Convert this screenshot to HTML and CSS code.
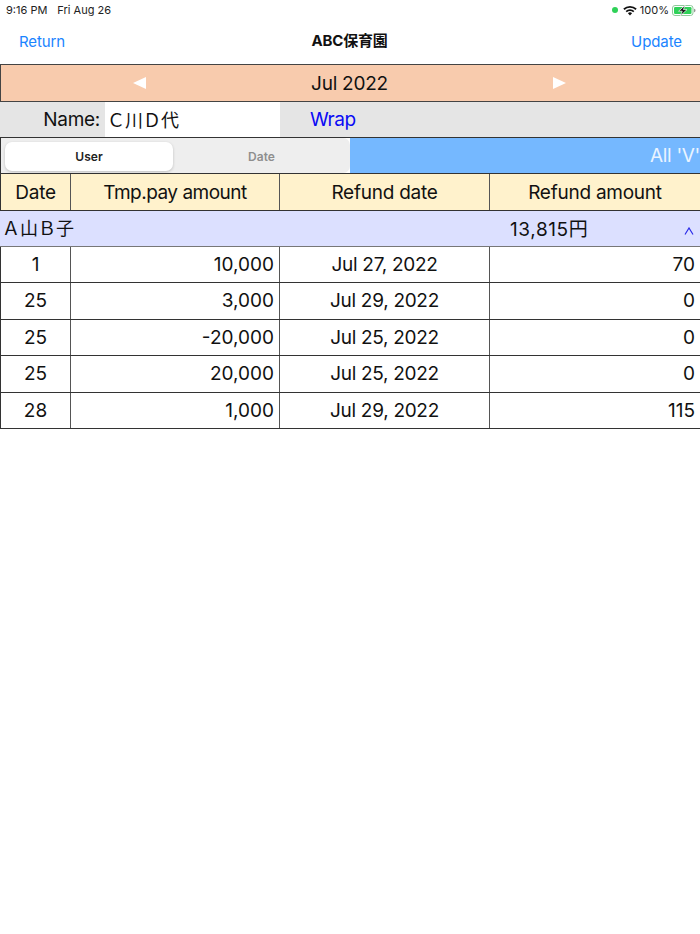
FILE: index.html
```html
<!DOCTYPE html>
<html lang="en">
<head>
    <meta charset="UTF-8">
    <title>ABC保育園</title>
    <link rel="stylesheet" href="styles.css">
</head>
<body>
    <div class="status-bar">
        <div class="status-left"><span>9:16 PM</span><span>Fri Aug 26</span></div>
        <div class="status-right">
            <span class="status-dot"></span>
            <svg class="wifi" width="14" height="11" viewBox="0 0 14 11">
                <path d="M0.3 3.6 A9.6 9.6 0 0 1 13.7 3.6 L12.5 4.9 A7.9 7.9 0 0 0 1.5 4.9 Z" fill="#111"/>
                <path d="M2.6 6 A6.3 6.3 0 0 1 11.4 6 L10.2 7.2 A4.6 4.6 0 0 0 3.8 7.2 Z" fill="#111"/>
                <path d="M4.9 8.3 A3 3 0 0 1 9.1 8.3 L7 10.5 Z" fill="#111"/>
            </svg>
            <span>100%</span>
            <svg class="battery" width="24" height="11" viewBox="0 0 24 11">
                <rect x="0.5" y="0.5" width="20.5" height="10" rx="2.5" fill="none" stroke="#8fc99a"/>
                <rect x="2" y="2" width="17.5" height="7" rx="1.2" fill="#2fd158"/>
                <path d="M22 3.8 C23 4 23.5 4.6 23.5 5.5 C23.5 6.4 23 7 22 7.2 Z" fill="#999"/>
                <path d="M13.2 0.2 L6.6 6.2 H10.2 L8.4 10.8 L15 4.6 H11.4 Z" fill="#111" stroke="#fff" stroke-width="0.7"/>
            </svg>
        </div>
    </div>

    <div class="nav-bar">
        <a class="nav-link">Return</a>
        <div class="nav-title">ABC保育園</div>
        <a class="nav-link">Update</a>
    </div>

    <div class="month-bar">
        <span class="arrow arrow-left"></span>
        <span class="month-label">Jul 2022</span>
        <span class="arrow arrow-right"></span>
    </div>

    <div class="name-row">
        <div class="name-label">Name:</div>
        <div class="name-value">Ｃ川Ｄ代</div>
        <div class="wrap-link">Wrap</div>
    </div>

    <div class="filter-row">
        <div class="segments">
            <div class="segment active">User</div>
            <div class="segment">Date</div>
        </div>
        <div class="all-v">All 'V'</div>
    </div>

    <div class="table-row table-head">
        <div class="cell center">Date</div>
        <div class="cell center tight">Tmp.pay amount</div>
        <div class="cell center">Refund date</div>
        <div class="cell center">Refund amount</div>
    </div>

    <div class="group-row">
        <div class="group-name">Ａ山Ｂ子</div>
        <div class="group-total">13,815円</div>
        <svg class="group-caret" width="10" height="8" viewBox="0 0 10 8">
            <path d="M1 7.5 L5 1 L9 7.5" fill="none" stroke="#2a2ae8" stroke-width="1.2"/>
        </svg>
    </div>

    <div class="table-row">
        <div class="cell center">1</div>
        <div class="cell right">10,000</div>
        <div class="cell center date-cell">Jul 27, 2022</div>
        <div class="cell right">70</div>
    </div>
    <div class="table-row">
        <div class="cell center">25</div>
        <div class="cell right">3,000</div>
        <div class="cell center date-cell">Jul 29, 2022</div>
        <div class="cell right">0</div>
    </div>
    <div class="table-row">
        <div class="cell center">25</div>
        <div class="cell right">-20,000</div>
        <div class="cell center date-cell">Jul 25, 2022</div>
        <div class="cell right">0</div>
    </div>
    <div class="table-row">
        <div class="cell center">25</div>
        <div class="cell right">20,000</div>
        <div class="cell center date-cell">Jul 25, 2022</div>
        <div class="cell right">0</div>
    </div>
    <div class="table-row">
        <div class="cell center">28</div>
        <div class="cell right">1,000</div>
        <div class="cell center date-cell">Jul 29, 2022</div>
        <div class="cell right">115</div>
    </div>
</body>
</html>
```

FILE: styles.css
```css
* {
    margin: 0;
    padding: 0;
    box-sizing: border-box;
}

body {
    background: #fff;
    color: #111;
    font-family: 'Inter', 'Noto Sans CJK JP', sans-serif;
    font-size: 19px;
    overflow: hidden;
}

.status-bar {
    height: 20px;
    padding: 0 4px 0 6px;
    display: flex;
    justify-content: space-between;
    align-items: center;
    font-size: 11px;
    color: #222;
}

.status-left {
    display: flex;
    gap: 10px;
}

.status-right {
    display: flex;
    align-items: center;
    gap: 3px;
}

.status-dot {
    width: 6px;
    height: 6px;
    margin-right: 2px;
    border-radius: 50%;
    background: #2fd158;
}

.nav-bar {
    height: 44px;
    padding: 0 18px 2px 19px;
    display: flex;
    justify-content: space-between;
    align-items: center;
}

.nav-link {
    color: #1a84ff;
    font-size: 15px;
    letter-spacing: -0.1px;
}

.nav-title {
    margin: 0 0 3px 3px;
    font-size: 15px;
    font-weight: 700;
    letter-spacing: -0.2px;
}

.month-bar {
    height: 38px;
    background: #f8cbad;
    border: 1px solid #444;
    border-right: none;
    padding: 0 36px 0 34px;
    display: grid;
    grid-template-columns: 1fr 1fr 1fr;
    align-items: center;
    justify-items: center;
    letter-spacing: -0.25px;
}

.arrow {
    width: 0;
    height: 0;
    border-top: 6px solid transparent;
    border-bottom: 6px solid transparent;
}

.arrow-left {
    border-right: 13px solid #fff;
}

.arrow-right {
    border-left: 13px solid #fff;
}

.name-row {
    height: 35px;
    background: #e5e5e5;
    display: flex;
    align-items: center;
}

.name-label {
    width: 105px;
    padding-right: 5px;
    text-align: right;
    letter-spacing: -0.3px;
}

.name-value {
    width: 175px;
    height: 100%;
    padding: 0 0 1px 2px;
    background: #fff;
    display: flex;
    align-items: center;
    font-size: 18px;
    white-space: nowrap;
}

.wrap-link {
    margin-left: 30px;
    color: #0a0af5;
    letter-spacing: -0.5px;
}

.filter-row {
    height: 37px;
    border: 1px solid #333;
    border-right: none;
    display: flex;
}

.segments {
    width: 349px;
    height: 35px;
    background: #eeeeee;
    border-radius: 0 7px 7px 0;
    padding: 3.5px 0 2.5px 4px;
    display: flex;
    font-size: 12px;
    font-weight: 600;
}

.segment {
    flex: 1;
    color: #8e8e8e;
    display: flex;
    align-items: center;
    justify-content: center;
}

.segment.active {
    flex: 0 0 168px;
    background: #fff;
    color: #222;
    border-radius: 7px;
    box-shadow: 0 1px 3px rgba(0, 0, 0, 0.2);
}

.all-v {
    flex: 1;
    background: #75b8ff;
    color: #eaf4ff;
    text-align: right;
    line-height: 35px;
    letter-spacing: -0.3px;
    white-space: nowrap;
}

.table-row {
    height: 36.5px;
    display: grid;
    grid-template-columns: 70px 209px 210px 1fr;
    border-bottom: 1px solid #333;
    border-left: 1px solid #333;
}

.table-head {
    background: #fff2cc;
    letter-spacing: -0.25px;
}

.table-head .cell {
    padding-top: 2px;
}

.cell {
    display: flex;
    align-items: center;
    border-right: 1px solid #555;
    white-space: nowrap;
}

.cell:last-child {
    border-right: none;
}

.center {
    justify-content: center;
}

.right {
    justify-content: flex-end;
    padding-right: 5px;
}

.tight {
    letter-spacing: -0.5px;
}

.date-cell {
    letter-spacing: -0.3px;
}

.group-row {
    height: 36px;
    padding-bottom: 2px;
    background: #dce0ff;
    border-bottom: 1px solid #777;
    display: grid;
    grid-template-columns: 489px 1fr 24px;
    align-items: center;
}

.group-name {
    padding-left: 2px;
    font-size: 18px;
    white-space: nowrap;
}

.group-total {
    padding-left: 21px;
    letter-spacing: 0.6px;
}

.group-caret {
    margin-top: 8px;
    margin-left: 8px;
}
```
